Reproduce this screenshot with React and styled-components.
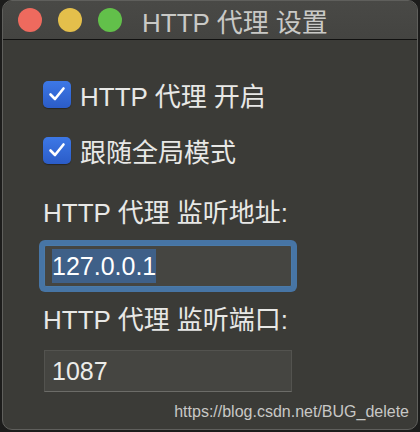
import React from 'react'
import styled, { createGlobalStyle } from 'styled-components'

const GlobalStyle = createGlobalStyle`
  html, body {
    margin: 0;
    padding: 0;
    background: #1c1c1b;
  }
  body {
    width: 420px;
    height: 432px;
    overflow: hidden;
    font-family: "Liberation Sans", "Noto Sans CJK SC", sans-serif;
  }
`;

const Window = styled.div`
  position: relative;
  margin-left: 2px;
  width: 416px;
  height: 430px;
  box-sizing: border-box;
  border: 1px solid #5f5f5c;
  border-radius: 10px;
  background: #3b3b37;
  overflow: hidden;
`;

const TitleBar = styled.div`
  display: flex;
  align-items: center;
  height: 38px;
  padding-left: 15px;
  background: linear-gradient(#494946, #444441);
  border-bottom: 1px solid #111110;
`;

const Lights = styled.div`
  display: flex;
  gap: 16px;
  margin-right: 20px;
`;

const Light = styled.span`
  width: 24px;
  height: 24px;
  border-radius: 50%;
  background: ${p => p.color};
`;

const Title = styled.div`
  font-size: 26px;
  color: #c9c9c6;
  white-space: nowrap;
`;

const Body = styled.div`
  display: flex;
  flex-direction: column;
  padding: 40px 0 0 40px;
`;

const CheckRow = styled.label`
  display: flex;
  align-items: center;
  gap: 9px;
  height: 28px;
  margin-bottom: ${p => p.gap}px;
  font-size: 26px;
  color: #e8e8e6;
`;

const Box = styled.span`
  display: flex;
  align-items: center;
  justify-content: center;
  width: 28px;
  height: 27px;
  border-radius: 5px;
  background: linear-gradient(#3d78e6, #2b5cc8);
  box-shadow: 0 1px 1px rgba(0, 0, 0, 0.35);
`;

const Label = styled.div`
  font-size: 26px;
  line-height: 30px;
  color: #e8e8e6;
  margin-bottom: ${p => p.gap}px;
`;

const Field = styled.div`
  display: flex;
  align-items: center;
  box-sizing: border-box;
  width: 248px;
  height: 42px;
  padding-left: 7px;
  margin-left: 1px;
  background: #454541;
  font-size: 25px;
  color: #ecece9;
  border: 1px solid ${p => (p.focused ? '#4a7aa9' : '#53534f')};
  border-bottom-color: ${p => (p.focused ? '#4a7aa9' : '#6c6c68')};
  border-radius: ${p => (p.focused ? '2px' : '0')};
  box-shadow: ${p => (p.focused ? '0 0 0 5px #4775a5' : 'none')};
  margin-bottom: ${p => p.gap || 0}px;
`;

const Selected = styled.span`
  background: #3f6088;
  color: #ffffff;
  line-height: 34px;
`;

const Watermark = styled.div`
  position: absolute;
  right: 8px;
  bottom: 8px;
  font-size: 16px;
  color: #c8c8c6;
  font-family: "Liberation Sans", Arial, sans-serif;
`;

function Check() {
  return (
    <svg width="18" height="16" viewBox="0 0 18 16">
      <path d="M2.5 8.5 L7 13 L15.5 2.5" fill="none" stroke="#fff" strokeWidth="2.6" strokeLinecap="round" strokeLinejoin="round" />
    </svg>
  )
}

export default function App() {
  return (
    <>
      <GlobalStyle />
      <Window>
        <TitleBar>
          <Lights>
            <Light color="#ee6a5e" />
            <Light color="#e4bf4b" />
            <Light color="#62c04a" />
          </Lights>
          <Title>HTTP 代理 设置</Title>
        </TitleBar>
        <Body>
          <CheckRow gap={28}><Box><Check /></Box>HTTP 代理 开启</CheckRow>
          <CheckRow gap={34}><Box><Check /></Box>跟随全局模式</CheckRow>
          <Label gap={17}>HTTP 代理 监听地址:</Label>
          <Field focused gap={18}><Selected>127.0.0.1</Selected></Field>
          <Label gap={15}>HTTP 代理 监听端口:</Label>
          <Field>1087</Field>
        </Body>
        <Watermark>https://blog.csdn.net/BUG_delete</Watermark>
      </Window>
    </>
  )
}
